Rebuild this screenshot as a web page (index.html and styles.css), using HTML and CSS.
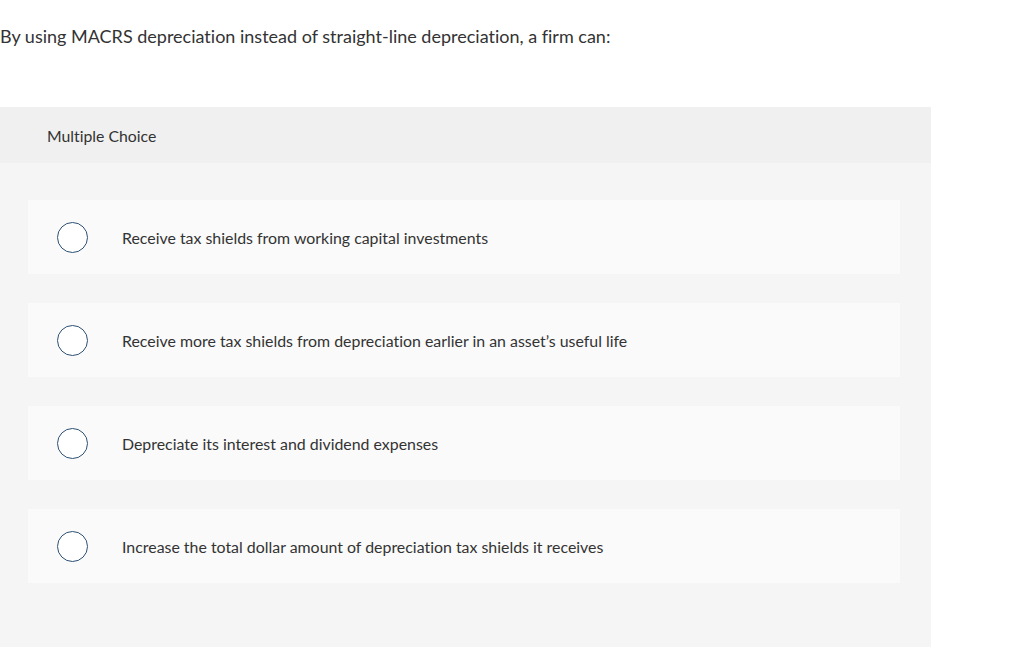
FILE: index.html
```html
<!DOCTYPE html>
<html>
<head>
<meta charset="utf-8">
<link rel="stylesheet" href="styles.css">
</head>
<body>
<p class="question">By using MACRS depreciation instead of straight-line depreciation, a firm can:</p>
<div class="panel">
  <div class="panel-header">Multiple Choice</div>
  <div class="panel-body">
    <div class="option"><span class="radio"></span><span class="label">Receive tax shields from working capital investments</span></div>
    <div class="option"><span class="radio"></span><span class="label">Receive more tax shields from depreciation earlier in an asset’s useful life</span></div>
    <div class="option"><span class="radio"></span><span class="label">Depreciate its interest and dividend expenses</span></div>
    <div class="option"><span class="radio"></span><span class="label">Increase the total dollar amount of depreciation tax shields it receives</span></div>
  </div>
</div>
</body>
</html>
```
FILE: styles.css
```css
html, body {
  margin: 0;
  padding: 0;
  background: #ffffff;
}
body {
  font-family: Lato, "Open Sans", sans-serif;
  font-variant-ligatures: none;
  color: #333333;
}
.question {
  margin: 0;
  padding-top: 25px;
  height: 107px;
  box-sizing: border-box;
  font-size: 18px;
  line-height: 22px;
}
.panel {
  width: 931px;
}
.panel-header {
  height: 56px;
  background: #f0f0f0;
  display: flex;
  align-items: center;
  padding-left: 47px;
  font-size: 15.8px;
  color: #333333;
}
.panel-body {
  background: #f5f5f5;
  padding: 37px 31px 64px 28px;
  display: flex;
  flex-direction: column;
  gap: 29px;
}
.option {
  height: 74px;
  background: #fafafa;
  display: flex;
  align-items: center;
  padding-left: 29px;
}
.radio {
  width: 29px;
  height: 29px;
  border: 1.5px solid #2d5073;
  border-radius: 50%;
  background: #ffffff;
  flex: none;
}
.label {
  margin-left: 34px;
  font-size: 15.9px;
  color: #333333;
}
```
